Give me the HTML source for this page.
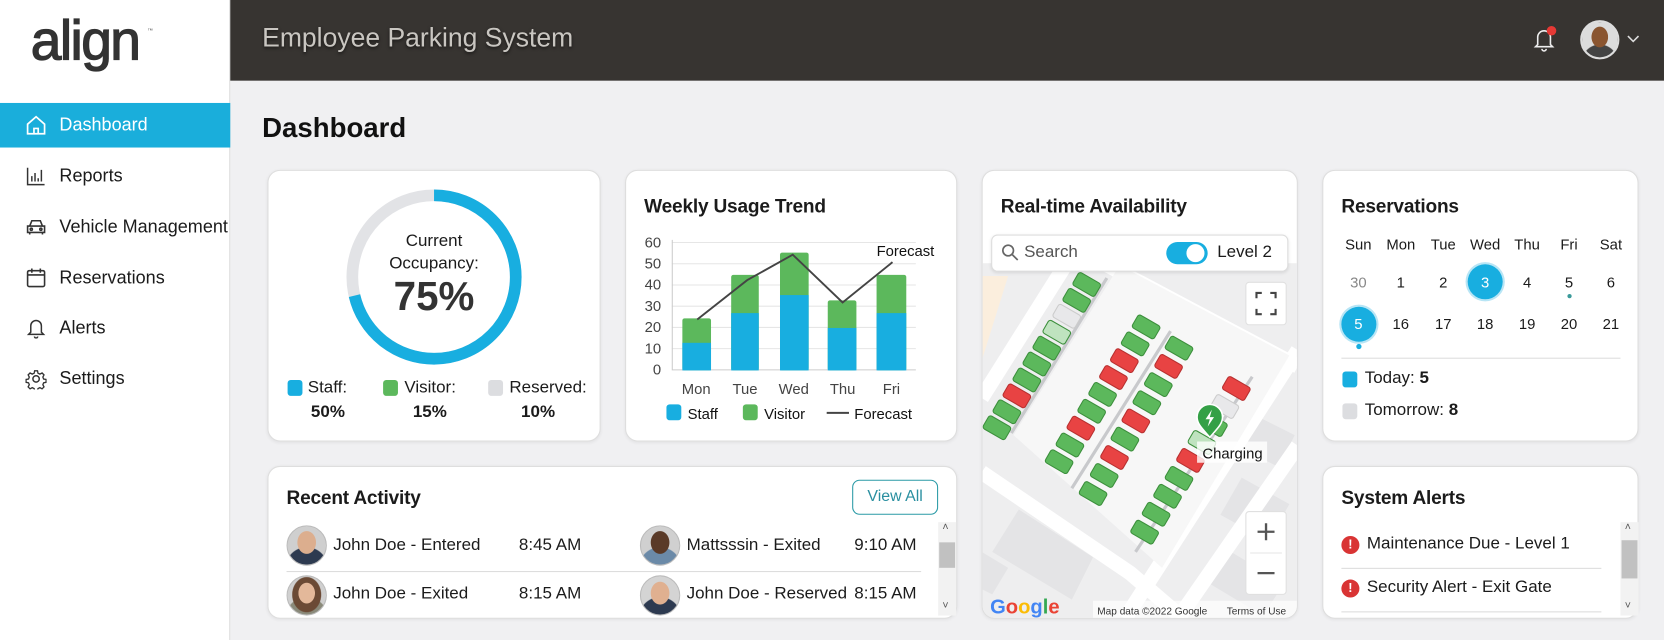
<!DOCTYPE html>
<html><head><meta charset="utf-8"><style>
*{box-sizing:border-box;margin:0;padding:0}
html,body{width:1664px;height:640px;overflow:hidden;background:#f0f0f2;font-family:"Liberation Sans",Arial,sans-serif;color:#1b1b1b}
#w{position:absolute;left:0;top:0;width:1568px;height:603px;transform:scale(1.06122,1.06136);transform-origin:0 0;background:#f0f0f2}
.a{position:absolute}
.card{position:absolute;background:#fff;border:1px solid #dedede;border-radius:12px;box-shadow:0 1px 3px rgba(0,0,0,.06)}
.t{position:absolute;font-size:18px;font-weight:bold;white-space:nowrap;letter-spacing:-.2px}
.nav{position:absolute;left:0;width:217px;height:42px;font-size:17px;display:flex;align-items:center;padding-left:56px}
.nav svg{position:absolute;left:24px;top:11px}
.tx{position:absolute;white-space:nowrap}
</style></head><body><div id="w">
<!-- sidebar -->
<div class="a" style="left:0;top:0;width:217px;height:603px;background:#fff;border-right:1px solid #ddd"></div>
<div class="tx" style="left:29px;top:9px;font-size:52px;font-weight:normal;color:#333;letter-spacing:-1.5px;-webkit-text-stroke:1.2px #333">align</div>
<div class="tx" style="left:139px;top:26px;font-size:5px;color:#555">™</div>
<div class="nav" style="top:97px;background:#1aaedb;color:#fff"><svg width="20" height="20" viewBox="0 0 20 20" fill="none" stroke="#fff" stroke-width="1.6"><path d="M2 9L10 2l8 7v9H2z"/><path d="M8 18v-5h4v5"/></svg>Dashboard</div>
<div class="nav" style="top:145px"><svg width="20" height="20" viewBox="0 0 20 20" fill="none" stroke="#333" stroke-width="1.4"><path d="M2 2v16h16M6 15v-5M9 15V7M12 15v-3M15 15V4"/></svg>Reports</div>
<div class="nav" style="top:193px"><svg width="20" height="20" viewBox="0 0 20 20" fill="none" stroke="#333" stroke-width="1.5"><path d="M4 9l2-5h8l2 5M2 9h16v6H2zM4 15v2M16 15v2"/><circle cx="5.5" cy="12" r="1"/><circle cx="14.5" cy="12" r="1"/></svg>Vehicle Management</div>
<div class="nav" style="top:241px"><svg width="20" height="20" viewBox="0 0 20 20" fill="none" stroke="#333" stroke-width="1.5"><rect x="2" y="3" width="16" height="15" rx="1.5"/><path d="M2 7h16M6 1v4M14 1v4"/></svg>Reservations</div>
<div class="nav" style="top:288px"><svg width="20" height="20" viewBox="0 0 20 20" fill="none" stroke="#333" stroke-width="1.4"><path d="M5 14V8a5 5 0 0110 0v6l2 2H3z M8.5 18a1.5 1.5 0 003 0"/></svg>Alerts</div>
<div class="nav" style="top:336px"><svg width="20" height="20" viewBox="0 0 20 20" fill="none" stroke="#333" stroke-width="1.4"><circle cx="10" cy="10" r="3"/><path d="M8.5 1.5h3l.5 2.5 2 1 2.3-1.2 2 2-1.2 2.3.8 2 2.6.5v3l-2.6.5-.8 2 1.2 2.3-2 2-2.3-1.2-2 1-.5 2.5h-3l-.5-2.5-2-1-2.3 1.2-2-2 1.2-2.3-.8-2-2.6-.5v-3l2.6-.5.8-2-1.2-2.3 2-2 2.3 1.2 2-1z" transform="scale(.9) translate(1.1 1.1)"/></svg>Settings</div>
<!-- header -->
<div class="a" style="left:217px;top:0;width:1351px;height:76px;background:#373431"></div>
<div class="tx" style="left:247px;top:22px;font-size:25px;color:#c9c6c1;text-shadow:0 1px 3px rgba(0,0,0,.6)">Employee Parking System</div>
<svg class="a" style="left:1442px;top:22px" width="30" height="30" viewBox="0 0 30 30" fill="none" stroke="#eee" stroke-width="1.5"><path d="M7 20V13a6 6 0 0112 0v7l2 2H5z M11 24a2 2 0 004 0"/><circle cx="20" cy="7" r="4.5" fill="#e53935" stroke="none"/></svg>
<div class="a" style="left:1489px;top:19px;width:37px;height:37px;border-radius:50%;background:radial-gradient(ellipse 8px 10px at 50% 42%,#8a5530 95%,transparent),radial-gradient(circle at 50% 115%,#444 40%,#dcdcdc 42%);border:2px solid #ddd"></div>
<svg class="a" style="left:1532px;top:32px" width="14" height="10" viewBox="0 0 14 10" fill="none" stroke="#ddd" stroke-width="1.5"><path d="M2 2l5 5 5-5"/></svg>
<div class="tx" style="left:247px;top:105px;font-size:26px;font-weight:bold;color:#111">Dashboard</div>

<!-- occupancy -->
<div class="card" style="left:252px;top:160px;width:314px;height:256px"></div>
<svg class="a" style="left:320px;top:172px" width="180" height="180" viewBox="0 0 180 180"><circle cx="89" cy="89" r="77" fill="none" stroke="#e2e3e6" stroke-width="11"/><circle cx="89" cy="89" r="77" fill="none" stroke="#18aee0" stroke-width="11" stroke-dasharray="345 500" transform="rotate(-90 89 89)" stroke-linecap="butt"/></svg>
<div class="tx" style="left:309px;top:217px;width:200px;text-align:center;font-size:16px;line-height:21px">Current<br>Occupancy:</div>
<div class="tx" style="left:309px;top:259px;width:200px;text-align:center;font-size:38px;font-weight:bold;color:#333">75%</div>
<div class="a" style="left:271px;top:358px;width:14px;height:15px;border-radius:3px;background:#18aee0"></div>
<div class="tx" style="left:290px;top:357px;font-size:16px">Staff:</div>
<div class="tx" style="left:293px;top:380px;font-size:16px;font-weight:bold">50%</div>
<div class="a" style="left:361px;top:358px;width:14px;height:15px;border-radius:3px;background:#5cb85c"></div>
<div class="tx" style="left:381px;top:357px;font-size:16px">Visitor:</div>
<div class="tx" style="left:389px;top:380px;font-size:16px;font-weight:bold">15%</div>
<div class="a" style="left:460px;top:358px;width:14px;height:15px;border-radius:3px;background:#dcdde0"></div>
<div class="tx" style="left:480px;top:357px;font-size:16px">Reserved:</div>
<div class="tx" style="left:491px;top:380px;font-size:16px;font-weight:bold">10%</div>

<!-- weekly -->
<div class="card" style="left:589px;top:160px;width:313px;height:256px"></div>
<div class="t" style="left:607px;top:184px">Weekly Usage Trend</div>
<svg class="a" style="left:589px;top:160px" width="313" height="256" viewBox="589 160 313 256" font-family="Liberation Sans,Arial,sans-serif" font-size="14" fill="#444">
<g stroke="#e6e6e6" stroke-width="1"><path d="M633 228.5H863M633 248.5H863M633 268.5H863M633 288.5H863M633 308.5H863M633 328.5H863"/></g>
<path d="M633.5 226V349M633 348.5H863" stroke="#ccc"/>
<g text-anchor="end"><text x="623" y="233">60</text><text x="623" y="253">50</text><text x="623" y="273">40</text><text x="623" y="293">30</text><text x="623" y="313">20</text><text x="623" y="333">10</text><text x="623" y="353">0</text></g>
<g fill="#5cb85c"><rect x="643" y="300" width="27" height="49" rx="2"/><rect x="689" y="259" width="26" height="90" rx="2"/><rect x="735" y="238" width="27" height="111" rx="2"/><rect x="780" y="283" width="27" height="66" rx="2"/><rect x="826" y="259" width="28" height="90" rx="2"/></g>
<g fill="#18aee0"><rect x="643" y="323" width="27" height="26"/><rect x="689" y="295" width="26" height="54"/><rect x="735" y="278" width="27" height="71"/><rect x="780" y="309" width="27" height="40"/><rect x="826" y="295" width="28" height="54"/></g>
<polyline points="657,301 704,264 747,240 794,285 841,247" fill="none" stroke="#444" stroke-width="1.8"/>
<text x="826" y="241" fill="#111">Forecast</text>
<g text-anchor="middle"><text x="656" y="371">Mon</text><text x="702" y="371">Tue</text><text x="748" y="371">Wed</text><text x="794" y="371">Thu</text><text x="840" y="371">Fri</text></g>
<rect x="628" y="381" width="14" height="15" rx="3" fill="#18aee0"/><text x="648" y="395" fill="#111">Staff</text>
<rect x="700" y="381" width="14" height="15" rx="3" fill="#5cb85c"/><text x="720" y="395" fill="#111">Visitor</text>
<path d="M779 389h21" stroke="#444" stroke-width="1.8"/><text x="805" y="395" fill="#111">Forecast</text>
</svg>

<!-- map -->
<div class="card" style="left:925px;top:160px;width:298px;height:423px;overflow:hidden">
<svg class="a" style="left:-1px;top:-1px" width="298" height="423" viewBox="925 160 298 423">
<rect x="925" y="248" width="298" height="335" fill="#eeeeef"/>
<path d="M925 260l25 0-25 80z" fill="#fbeedd"/>
<g fill="#e4e4e6"><path d="M960 480l70 45-20 40-75-45z"/><path d="M1170 450l45 25-20 35-45-25z"/><path d="M1160 520l50 30-20 30-50-30z"/><path d="M1180 390l40 20-15 30-40-20z"/><path d="M925 520l25 15-15 25-10-5z"/></g>
<g fill="none" stroke="#ffffff" stroke-width="14"><path d="M925 445L1065 540 1115 583"/><path d="M1040 248L1223 345"/><path d="M1223 420L1110 583"/><path d="M925 375L1005 248"/><path d="M1060 583L1223 330"/></g>
<path d="M955 410l100-160 160 85-120 200z" fill="#f7f7f7"/>
<g stroke="#c8c9cc" stroke-width="3"><path d="M1043 262L953 408"/><path d="M1103 312L1010 460"/><path d="M1180 355L1070 520"/></g>
<defs><rect id="s" x="-12" y="-7" width="24" height="14" rx="2.5" stroke-width="1" /></defs>
<g>
<g fill="#5cb85c" stroke="#3c8f3c">
<use href="#s" transform="translate(1024 268) rotate(30)"/><use href="#s" transform="translate(1014.6 283) rotate(30)"/>
<use href="#s" transform="translate(995.8 313) rotate(30)" fill="#bfe3bf"/><use href="#s" transform="translate(986.4 328) rotate(30)"/><use href="#s" transform="translate(977 343) rotate(30)"/><use href="#s" transform="translate(967.6 358) rotate(30)"/><use href="#s" transform="translate(948.8 388) rotate(30)"/><use href="#s" transform="translate(939.4 403) rotate(30)"/>
<use href="#s" transform="translate(1080 308) rotate(30)"/><use href="#s" transform="translate(1069.7 324) rotate(30)"/><use href="#s" transform="translate(1039 371.6) rotate(30)"/><use href="#s" transform="translate(1028.7 387.5) rotate(30)"/><use href="#s" transform="translate(1008.2 419.3) rotate(30)"/><use href="#s" transform="translate(998 435) rotate(30)"/>
<use href="#s" transform="translate(1111 328) rotate(30)"/><use href="#s" transform="translate(1091.5 362.4) rotate(30)"/><use href="#s" transform="translate(1080.7 379.5) rotate(30)"/><use href="#s" transform="translate(1060 413.7) rotate(30)"/><use href="#s" transform="translate(1040.5 448) rotate(30)"/><use href="#s" transform="translate(1030 465) rotate(30)"/>
<use href="#s" transform="translate(1143.4 400) rotate(30)"/><use href="#s" transform="translate(1132.6 416.9) rotate(30)" fill="#bfe3bf"/><use href="#s" transform="translate(1111 450.7) rotate(30)"/><use href="#s" transform="translate(1100.2 467.6) rotate(30)"/><use href="#s" transform="translate(1089.4 484.5) rotate(30)"/><use href="#s" transform="translate(1078.6 501.4) rotate(30)"/>
</g>
<g fill="#e84343" stroke="#b83030">
<use href="#s" transform="translate(958.2 373) rotate(30)"/><use href="#s" transform="translate(1059.5 339.8) rotate(30)"/><use href="#s" transform="translate(1049.2 355.7) rotate(30)"/><use href="#s" transform="translate(1018.5 403.4) rotate(30)"/>
<use href="#s" transform="translate(1101.2 345.2) rotate(30)"/><use href="#s" transform="translate(1070.3 396.6) rotate(30)"/><use href="#s" transform="translate(1050.2 431) rotate(30)"/>
<use href="#s" transform="translate(1165 366) rotate(30)"/><use href="#s" transform="translate(1121.8 433.8) rotate(30)"/>
</g>
<use href="#s" transform="translate(1005.2 298) rotate(30)" fill="#e8e8ea" stroke="#ccc"/>
<use href="#s" transform="translate(1154.2 383) rotate(30)" fill="#e8e8ea" stroke="#ccc"/>
</g>
<path d="M1140 412c-8-9-12-13-12-19a12 12 0 0124 0c0 6-4 10-12 19z" fill="#34a046" stroke="#fff" stroke-width="1.5"/>
<path d="M1142 386l-6 9h4l-2 7 6-9h-4z" fill="#fff"/>
<rect x="1128" y="416" width="66" height="20" fill="rgba(255,255,255,.8)"/>
<text x="1133" y="432" font-family="Liberation Sans,Arial,sans-serif" font-size="14" fill="#111">Charging</text>
<rect x="1174" y="266" width="38" height="40" rx="3" fill="#fff" stroke="#e0e0e0"/>
<path d="M1184 281v-5h5M1197 276h5v5M1202 291v5h-5M1189 296h-5v-5" fill="none" stroke="#444" stroke-width="2"/>
<rect x="1174" y="482" width="38" height="78" rx="3" fill="#fff" stroke="#e0e0e0"/>
<path d="M1178 521h30" stroke="#e6e6e6"/>
<path d="M1193 493v16M1185 501h16M1185 540h16" stroke="#555" stroke-width="2.2"/>
<text x="933" y="578" font-family="Liberation Sans,Arial,sans-serif" font-size="19" font-weight="bold"><tspan fill="#4285f4">G</tspan><tspan fill="#ea4335">o</tspan><tspan fill="#fbbc05">o</tspan><tspan fill="#4285f4">g</tspan><tspan fill="#34a853">l</tspan><tspan fill="#ea4335">e</tspan></text>
<rect x="1030" y="566" width="193" height="17" fill="rgba(255,255,255,.7)"/>
<text x="1034" y="579" font-family="Liberation Sans,Arial,sans-serif" font-size="9.5" fill="#333">Map data ©2022 Google</text>
<text x="1156" y="579" font-family="Liberation Sans,Arial,sans-serif" font-size="9.5" fill="#333">Terms of Use</text>
</svg>
</div>
<div class="t" style="left:943px;top:184px">Real-time Availability</div>
<div class="a" style="left:934px;top:221px;width:280px;height:35px;background:#fff;border:1px solid #ddd;border-radius:6px;box-shadow:0 1px 3px rgba(0,0,0,.1)"></div>
<svg class="a" style="left:943px;top:229px" width="18" height="18" viewBox="0 0 18 18" fill="none" stroke="#666" stroke-width="1.6"><circle cx="7" cy="7" r="5"/><path d="M11 11l5 5"/></svg>
<div class="tx" style="left:965px;top:229px;font-size:16px;color:#555">Search</div>
<div class="a" style="left:1099px;top:228px;width:39px;height:21px;border-radius:11px;background:#18aee0"></div>
<div class="a" style="left:1118px;top:230px;width:17px;height:17px;border-radius:50%;background:#fff"></div>
<div class="tx" style="left:1147px;top:229px;font-size:16px">Level 2</div>

<!-- reservations -->
<div class="card" style="left:1246px;top:160px;width:298px;height:256px"></div>
<div class="t" style="left:1264px;top:184px">Reservations</div>
<div class="a" style="left:1383px;top:249px;width:33px;height:33px;border-radius:50%;background:#18aee0;box-shadow:0 0 0 2px #b8e5f5"></div>
<div class="a" style="left:1264px;top:289px;width:33px;height:33px;border-radius:50%;background:#18aee0;box-shadow:0 0 0 2px #b8e5f5"></div>
<div class="a" style="left:1477px;top:277px;width:4px;height:4px;border-radius:50%;background:#3a9a9a"></div>
<div class="a" style="left:1278px;top:324px;width:5px;height:5px;border-radius:50%;background:#18aee0"></div>
<div class="a" style="left:1260px;top:222px;font-size:14px;line-height:16px">
<div style="display:flex"><span style="width:40px;text-align:center">Sun</span><span style="width:40px;text-align:center">Mon</span><span style="width:40px;text-align:center">Tue</span><span style="width:39px;text-align:center">Wed</span><span style="width:40px;text-align:center">Thu</span><span style="width:39px;text-align:center">Fri</span><span style="width:40px;text-align:center">Sat</span></div>
<div style="display:flex;margin-top:20px"><span style="width:40px;text-align:center;color:#888">30</span><span style="width:40px;text-align:center">1</span><span style="width:40px;text-align:center">2</span><span style="width:39px;text-align:center;color:#fff">3</span><span style="width:40px;text-align:center">4</span><span style="width:39px;text-align:center">5</span><span style="width:40px;text-align:center">6</span></div>
<div style="display:flex;margin-top:23px"><span style="width:40px;text-align:center;color:#fff">5</span><span style="width:40px;text-align:center">16</span><span style="width:40px;text-align:center">17</span><span style="width:39px;text-align:center">18</span><span style="width:40px;text-align:center">19</span><span style="width:39px;text-align:center">20</span><span style="width:40px;text-align:center">21</span></div>
</div>
<div class="a" style="left:1264px;top:337px;width:263px;height:1px;background:#ddd"></div>
<div class="a" style="left:1265px;top:350px;width:14px;height:15px;border-radius:3px;background:#18aee0"></div>
<div class="tx" style="left:1286px;top:348px;font-size:16px">Today: <b>5</b></div>
<div class="a" style="left:1265px;top:380px;width:14px;height:15px;border-radius:3px;background:#dcdde0"></div>
<div class="tx" style="left:1286px;top:378px;font-size:16px">Tomorrow: <b>8</b></div>

<!-- system alerts -->
<div class="card" style="left:1246px;top:439px;width:298px;height:144px"></div>
<div class="t" style="left:1264px;top:459px">System Alerts</div>
<div class="a" style="left:1264px;top:505px;width:17px;height:17px;border-radius:50%;background:#d93434;color:#fff;font-size:12px;font-weight:bold;text-align:center;line-height:17px">!</div>
<div class="tx" style="left:1288px;top:504px;font-size:16px">Maintenance Due - Level 1</div>
<div class="a" style="left:1264px;top:535px;width:245px;height:1px;background:#ddd"></div>
<div class="a" style="left:1264px;top:546px;width:17px;height:17px;border-radius:50%;background:#d93434;color:#fff;font-size:12px;font-weight:bold;text-align:center;line-height:17px">!</div>
<div class="tx" style="left:1288px;top:545px;font-size:16px">Security Alert - Exit Gate</div>
<div class="a" style="left:1264px;top:576px;width:245px;height:1px;background:#ddd"></div>
<div class="a" style="left:1527px;top:492px;width:17px;height:88px;background:#f2f2f2"></div>
<div class="a" style="left:1528px;top:509px;width:15px;height:36px;background:#c1c1c1"></div>
<div class="tx" style="left:1531px;top:492px;font-size:10px;color:#555">˄</div>
<div class="tx" style="left:1531px;top:566px;font-size:10px;color:#555">˅</div>

<!-- recent activity -->
<div class="card" style="left:252px;top:439px;width:650px;height:144px"></div>
<div class="t" style="left:270px;top:459px">Recent Activity</div>
<div class="a" style="left:803px;top:452px;width:81px;height:33px;border:1.5px solid #2a9aa6;border-radius:7px;color:#2a8fa0;font-size:15px;text-align:center;line-height:30px">View All</div>
<div class="a" style="left:270px;top:495px;width:38px;height:38px;border-radius:50%;border:1px solid #bbb;background:radial-gradient(ellipse 9px 11px at 50% 42%,#dcae8e 95%,transparent),radial-gradient(circle at 50% 110%,#2d3a50 45%,#cfcfcf 47%)"></div>
<div class="a" style="left:270px;top:542px;width:38px;height:38px;border-radius:50%;border:1px solid #bbb;background:radial-gradient(ellipse 8px 10px at 50% 44%,#e3b89a 95%,transparent),radial-gradient(ellipse 14px 17px at 50% 48%,#6b4a35 95%,transparent),radial-gradient(circle at 50% 110%,#8a8a7a 45%,#d0d0d0 47%)"></div>
<div class="a" style="left:603px;top:495px;width:38px;height:38px;border-radius:50%;border:1px solid #bbb;background:radial-gradient(ellipse 9px 11px at 50% 42%,#5a3a28 95%,transparent),radial-gradient(circle at 50% 110%,#6b8aa8 45%,#d0d0d0 47%)"></div>
<div class="a" style="left:603px;top:542px;width:38px;height:38px;border-radius:50%;border:1px solid #bbb;background:radial-gradient(ellipse 9px 11px at 50% 44%,#e0b090 95%,transparent),radial-gradient(circle at 50% 110%,#2d3a50 45%,#d4d4d4 47%)"></div>
<div class="tx" style="left:314px;top:505px;font-size:16px">John Doe - Entered</div>
<div class="tx" style="left:489px;top:505px;font-size:16px">8:45 AM</div>
<div class="tx" style="left:647px;top:505px;font-size:16px">Mattsssin - Exited</div>
<div class="tx" style="left:805px;top:505px;font-size:16px">9:10 AM</div>
<div class="a" style="left:270px;top:538px;width:598px;height:1px;background:#ddd"></div>
<div class="tx" style="left:314px;top:551px;font-size:16px">John Doe - Exited</div>
<div class="tx" style="left:489px;top:551px;font-size:16px">8:15 AM</div>
<div class="tx" style="left:647px;top:551px;font-size:16px">John Doe - Reserved</div>
<div class="tx" style="left:805px;top:551px;font-size:16px">8:15 AM</div>
<div class="a" style="left:884px;top:492px;width:17px;height:88px;background:#f2f2f2"></div>
<div class="a" style="left:885px;top:511px;width:15px;height:24px;background:#c1c1c1"></div>
<div class="tx" style="left:888px;top:492px;font-size:10px;color:#555">˄</div>
<div class="tx" style="left:888px;top:566px;font-size:10px;color:#555">˅</div>
</div></body></html>
